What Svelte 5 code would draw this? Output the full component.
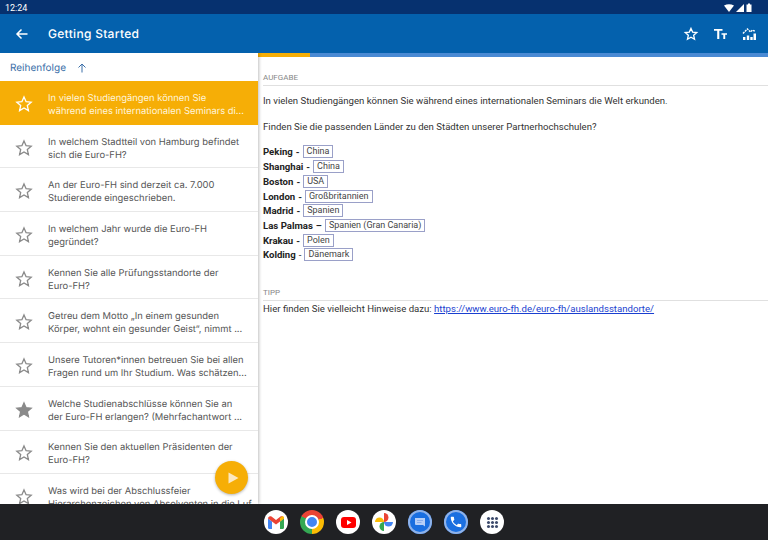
<script>
  const questions = [
    { lines: ['In vielen Studiengängen können Sie', 'während eines internationalen Seminars di...'], active: true },
    { lines: ['In welchem Stadtteil von Hamburg befindet', 'sich die Euro-FH?'] },
    { lines: ['An der Euro-FH sind derzeit ca. 7.000', 'Studierende eingeschrieben.'] },
    { lines: ['In welchem Jahr wurde die Euro-FH', 'gegründet?'] },
    { lines: ['Kennen Sie alle Prüfungsstandorte der', 'Euro-FH?'] },
    { lines: ['Getreu dem Motto „In einem gesunden', 'Körper, wohnt ein gesunder Geist“, nimmt ...'] },
    { lines: ['Unsere Tutoren*innen betreuen Sie bei allen', 'Fragen rund um Ihr Studium. Was schätzen...'] },
    { lines: ['Welche Studienabschlüsse können Sie an', 'der Euro-FH erlangen? (Mehrfachantwort ...'], starred: true },
    { lines: ['Kennen Sie den aktuellen Präsidenten der', 'Euro-FH?'] },
    { lines: ['Was wird bei der Abschlussfeier', 'Hierarchenzeichen von Absolventen in die Luf...'] }
  ]

  const cities = [
    { city: 'Peking', sep: '-', land: 'China' },
    { city: 'Shanghai', sep: '-', land: 'China' },
    { city: 'Boston', sep: '-', land: 'USA' },
    { city: 'London', sep: '-', land: 'Großbritannien' },
    { city: 'Madrid', sep: '-', land: 'Spanien' },
    { city: 'Las Palmas', sep: '–', land: 'Spanien (Gran Canaria)' },
    { city: 'Krakau', sep: '-', land: 'Polen' },
    { city: 'Kolding', sep: '-', land: 'Dänemark', light: true }
  ]

  const star = 'M12 3.6l2.5 5.6 6.1.6-4.6 4.1 1.3 6-5.3-3.1-5.3 3.1 1.3-6-4.6-4.1 6.1-.6z'
</script>

<div class="screen">
  <div class="status">
    <span class="time">12:24</span>
    <div class="status-icons">
      <svg width="10" height="8" viewBox="0 0 10 8"><path d="M0 1.5Q5-1 10 1.5L5 8z" fill="#fff" /></svg>
      <svg width="8" height="8" viewBox="0 0 8 8"><path d="M8 0v8H0z" fill="#fff" /></svg>
      <svg width="6" height="9" viewBox="0 0 6 9"><path d="M.5 1.5H2V.5h2v1h1.500V9H.5z" fill="#fff" /></svg>
    </div>
  </div>

  <header class="appbar">
    <svg class="back" width="14" height="14" viewBox="0 0 14 14"><path d="M12.500 7H2M6.500 2.500L2 7l4.500 4.500" fill="none" stroke="#fff" stroke-width="1.500" /></svg>
    <h1>Getting Started</h1>
    <div class="actions">
      <svg width="16" height="16" viewBox="0 0 24 24"><path d={star} fill="none" stroke="#fff" stroke-width="2" /></svg>
      <svg width="16" height="16" viewBox="0 0 16 16"><path d="M2 3h8.500v1.800H7.300V13H5.200V4.800H2zM9.500 7.200h5.500v1.500h-1.800V13h-1.900V8.700H9.500z" fill="#fff" /></svg>
      <svg width="16" height="16" viewBox="0 0 16 16"><path d="M2 11h2.400v3H2zM5.800 9.500h2.400V14H5.800zM9.300 11h2.400v3H9.300zM12.500 7.500H15V14h-2.500z" fill="#fff" /><path d="M2 7.500L6.500 3l3 3 2-2 3 1.500" fill="none" stroke="#fff" stroke-width="1.400" stroke-dasharray="2 .8" /></svg>
    </div>
  </header>

  <div class="main">
    <aside class="sidebar">
      <div class="sort">
        <span>Reihenfolge</span>
        <svg width="10" height="10" viewBox="0 0 10 10"><path d="M5 9.500V1M1.500 4.500L5 1l3.500 3.500" fill="none" stroke="#3a6ea8" stroke-width="1" /></svg>
      </div>
      <ul>
        {#each questions as q}
          <li class:active={q.active}>
            <svg class="star" width="20" height="20" viewBox="0 0 24 24">
              <path d={star} fill={q.starred ? 'currentColor' : 'none'} stroke="currentColor" stroke-width="1.600" />
            </svg>
            <p>{q.lines[0]}<br />{q.lines[1]}</p>
          </li>
        {/each}
      </ul>
      <button class="fab" aria-label="Start">
        <svg width="12" height="12" viewBox="0 0 12 12"><path d="M1.500 0.500L11.500 6 1.500 11.500z" fill="#fce8c0" /></svg>
      </button>
    </aside>

    <section class="detail">
      <div class="progress"><div class="bar" style:width="52px"></div></div>
      <div class="content">
        <h2>AUFGABE</h2>
        <p class="intro">In vielen Studiengängen können Sie während eines internationalen Seminars die Welt erkunden.</p>
        <p class="intro">Finden Sie die passenden Länder zu den Städten unserer Partnerhochschulen?</p>
        <div class="cities">
          {#each cities as c}
            <div class="city">
              <b>{c.city}</b>
              <b class:light={c.light}>{c.sep}</b>
              <span class="answer">{c.land}</span>
            </div>
          {/each}
        </div>
        <h2 class="tipp">TIPP</h2>
        <p class="hint">Hier finden Sie vielleicht Hinweise dazu: <a href="#tipp">https://www.euro-fh.de/euro-fh/auslandsstandorte/</a></p>
      </div>
    </section>
  </div>

  <nav class="dock">
    <div class="app">
      <svg width="16" height="13" viewBox="0 0 16 13">
        <path d="M0 2.500v9A1.500 1.500 0 0 0 1.500 13H4V5.500z" fill="#4285f4" />
        <path d="M16 2.500v9a1.500 1.500 0 0 1-1.500 1.500H12V5.500z" fill="#34a853" />
        <path d="M0 2.500C0 .5 2-.5 3.500.6L8 4l4.500-3.400C14-.5 16 .5 16 2.500L12 5.500 8 8.500 4 5.500z" fill="#ea4335" />
        <path d="M12 5.500l4-3V2c0-1-.6-1.700-1.300-1.900L12 2.100z" fill="#fbbc04" />
      </svg>
    </div>
    <div class="app chrome"><span></span></div>
    <div class="app">
      <svg width="15" height="11" viewBox="0 0 15 11"><rect width="15" height="11" rx="3" fill="#f00" /><path d="M6 3l4.500 2.500L6 8z" fill="#fff" /></svg>
    </div>
    <div class="app">
      <svg width="18" height="18" viewBox="0 0 18 18">
        <path d="M9 9H0A4.500 4.500 0 0 1 9 9z" fill="#fbbc04" />
        <path d="M9 9V0A4.500 4.500 0 0 1 9 9z" fill="#ea4335" />
        <path d="M9 9h9A4.500 4.500 0 0 1 9 9z" fill="#4285f4" />
        <path d="M9 9v9A4.500 4.500 0 0 1 9 9z" fill="#34a853" />
      </svg>
    </div>
    <div class="app blue">
      <svg width="12" height="11" viewBox="0 0 12 11"><path d="M1 1h10v8.500L9 8H2a1 1 0 0 1-1-1z" fill="#b6cff7" /><path d="M3 3.500h6M3 5.500h4.500" stroke="#7ea6e8" stroke-width=".8" /></svg>
    </div>
    <div class="app blue">
      <svg width="14" height="14" viewBox="0 0 24 24"><path d="M6.600 10.800c1.400 2.800 3.800 5.100 6.600 6.600l2.200-2.200c.3-.3.700-.4 1-.2 1.100.4 2.300.6 3.600.6.600 0 1 .4 1 1V20c0 .6-.4 1-1 1C10.600 21 3 13.400 3 4c0-.6.400-1 1-1h3.500c.6 0 1 .4 1 1 0 1.300.2 2.500.6 3.600.1.300 0 .7-.2 1z" fill="#fff" /></svg>
    </div>
    <div class="app">
      <div class="dots">
        {#each Array(9) as _}<i></i>{/each}
      </div>
    </div>
  </nav>
</div>

<style>
  :global(body) {
    margin: 0;
    overflow: hidden;
  }

  .screen {
    width: 768px;
    height: 540px;
    display: flex;
    flex-direction: column;
    overflow: hidden;
    background: #fff;
    font-family: Roboto, sans-serif;
  }

  .status {
    height: 14px;
    flex-shrink: 0;
    display: flex;
    align-items: center;
    justify-content: space-between;
    padding: 1px 16px 0 5px;
    box-sizing: border-box;
    background: #06316f;
    color: #fff;
  }

  .time {
    font-size: 9px;
  }

  .status-icons {
    display: flex;
    align-items: center;
    gap: 2px;
  }

  .appbar {
    height: 39px;
    flex-shrink: 0;
    display: flex;
    align-items: center;
    background: #0461ad;
    color: #fff;
    position: relative;
    z-index: 2;
  }

  .back {
    margin-left: 15px;
  }

  h1 {
    margin: 0 0 0 19px;
    font-family: Inter, sans-serif;
    font-size: 12px;
    font-weight: 500;
    letter-spacing: 0.3px;
    text-rendering: geometricPrecision;
  }

  .actions {
    margin-left: auto;
    margin-right: 11px;
    display: flex;
    align-items: center;
    gap: 13px;
  }

  .main {
    flex: 1;
    min-height: 0;
    display: flex;
  }

  .sidebar {
    width: 258px;
    flex-shrink: 0;
    position: relative;
    overflow: hidden;
    box-shadow: 1px 0 3px rgba(0, 0, 0, 0.25);
    z-index: 1;
  }

  .sort {
    height: 28px;
    box-sizing: border-box;
    padding: 1px 0 0 10px;
    display: flex;
    align-items: center;
    gap: 11px;
    font-family: Inter, sans-serif;
    font-size: 10px;
    text-rendering: geometricPrecision;
    color: #3a6ea8;
  }

  ul {
    list-style: none;
    margin: 0;
    padding: 0;
  }

  li {
    height: 43.7px;
    box-sizing: border-box;
    display: flex;
    align-items: center;
    border-bottom: 1px solid #e8e8e8;
    color: #8a8a8a;
  }

  li.active {
    background: #f6ae06;
    border-bottom-color: #f6ae06;
    color: #fff;
  }

  .star {
    margin: 3px 0 0 14px;
    flex-shrink: 0;
  }

  li p {
    margin: 5px 0 0 14px;
    font-family: Inter, sans-serif;
    font-size: 9.4px;
    line-height: 13px;
    text-rendering: geometricPrecision;
    color: #555;
    white-space: nowrap;
  }

  li.active p {
    color: #fff5dd;
  }

  .fab {
    position: absolute;
    right: 10px;
    bottom: 10px;
    width: 33px;
    height: 33px;
    border: none;
    border-radius: 50%;
    padding: 0 0 0 2px;
    display: grid;
    place-items: center;
    background: #f6ae06;
    box-shadow: 0 1px 3px rgba(0, 0, 0, 0.3);
  }

  .detail {
    flex: 1;
    min-width: 0;
  }

  .progress {
    height: 4px;
    background: #4a8ad4;
  }

  .bar {
    height: 100%;
    background: #f6ae06;
  }

  .content {
    padding: 0 0 0 5px;
    font-size: 9.6px;
    color: #333;
  }

  h2 {
    margin: 0;
    padding: 16px 0 2px;
    border-bottom: 1px solid #e0e0e0;
    font-size: 8px;
    font-weight: 400;
    color: #888;
    line-height: 10px;
  }

  .intro {
    margin: 8px 0 0;
    line-height: 14px;
  }

  .intro + .intro {
    margin-top: 12px;
  }

  .cities {
    margin-top: 10.6px;
  }

  .city {
    height: 14.7px;
    display: flex;
    align-items: center;
    gap: 3px;
    white-space: nowrap;
  }

  .city b {
    font-weight: 700;
    color: #222;
  }

  .city b.light {
    font-weight: 400;
  }

  .answer {
    padding: 0 3px;
    height: 11px;
    line-height: 11px;
    border: 1px solid #9aa0c8;
    font-size: 9px;
    color: #444;
  }

  .tipp {
    margin-top: 10px;
  }

  .hint {
    margin: 1px 0 0;
    line-height: 14px;
  }

  a {
    color: #1a3fd0;
  }

  .dock {
    height: 36px;
    flex-shrink: 0;
    position: relative;
    z-index: 3;
    display: flex;
    align-items: center;
    justify-content: center;
    gap: 12px;
    background: #202124;
  }

  .app {
    width: 24px;
    height: 24px;
    border-radius: 50%;
    background: #fff;
    display: grid;
    place-items: center;
    overflow: hidden;
  }

  .app.blue {
    background: #1a6fe0;
    box-shadow: inset 0 0 0 2px #8fb2e8;
  }

  .chrome {
    background: conic-gradient(from 300deg, #ea4335 0 130deg, #fbbc04 130deg 240deg, #34a853 240deg 360deg);
  }

  .chrome span {
    width: 10px;
    height: 10px;
    border-radius: 50%;
    background: #4285f4;
    border: 2px solid #fff;
  }

  .dots {
    display: grid;
    grid-template-columns: repeat(3, 3px);
    gap: 1px;
  }

  .dots i {
    width: 3px;
    height: 3px;
    border-radius: 50%;
    background: #3c4a6b;
  }
</style>
